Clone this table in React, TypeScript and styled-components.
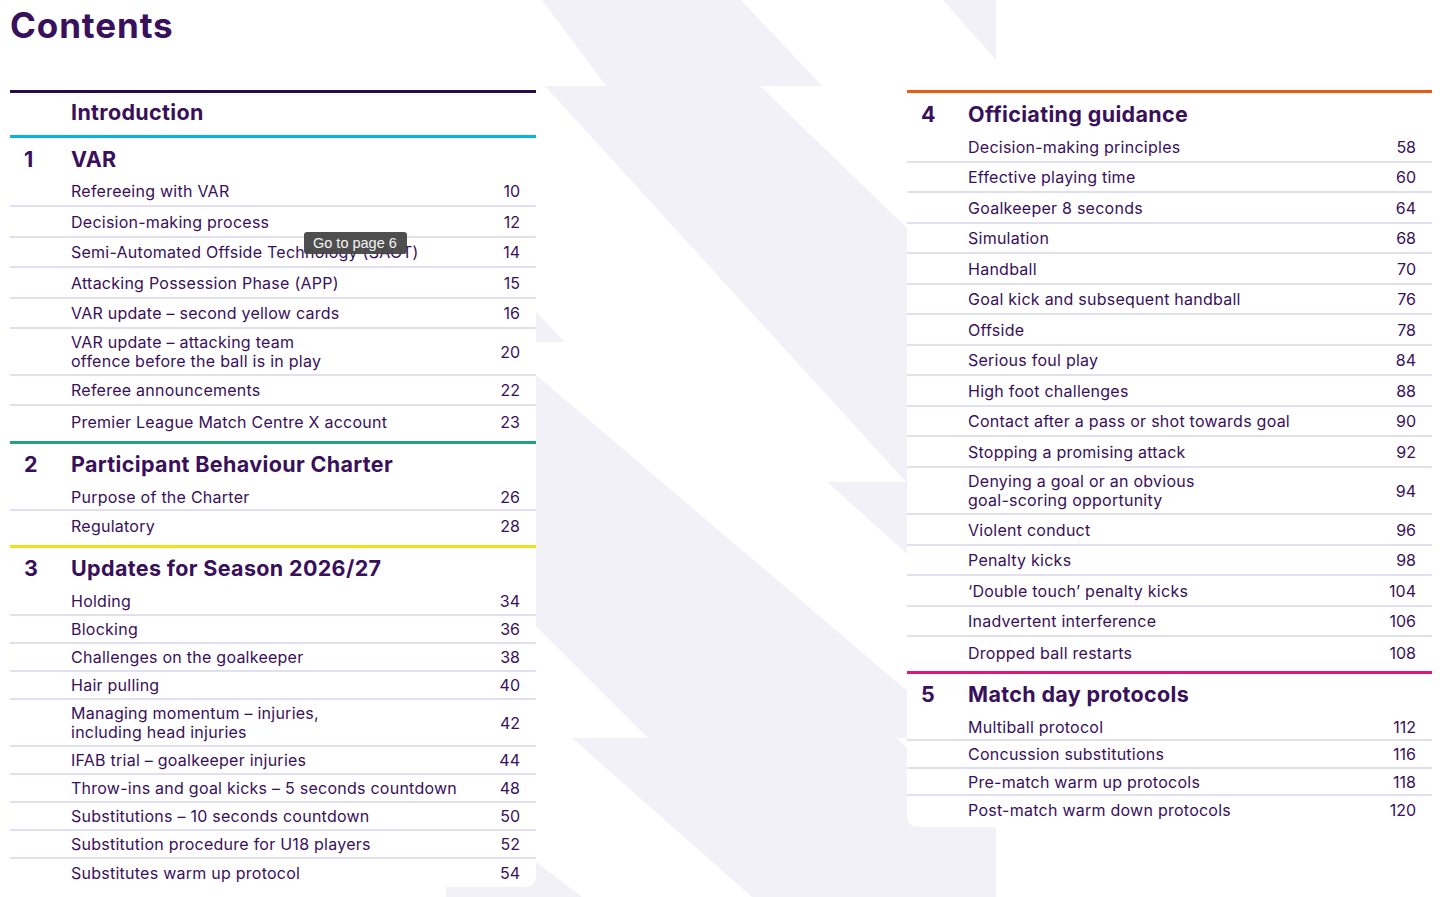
import React from "react";
import styled, { createGlobalStyle } from "styled-components";

const PURPLE = "#38105c";
const SEP = "#e2dfee";
const BG_SHAPE = "#f2f1f7";

const GlobalStyle = createGlobalStyle`
  html, body { margin: 0; padding: 0; background: #ffffff; }
  body { font-family: Inter, Lato, "Noto Sans", Arial, sans-serif; color: ${PURPLE}; }
  * { box-sizing: border-box; }
`;

const Page = styled.div`
  position: relative;
  width: 1456px;
  height: 897px;
  overflow: hidden;
  padding: 0 24px 0 10px;
  background: #ffffff;
`;

const Backdrop = styled.svg`
  position: absolute;
  left: 0;
  top: 0;
  width: 1456px;
  height: 897px;
  z-index: 0;
`;

const Title = styled.h1`
  position: relative;
  z-index: 1;
  margin: 0;
  padding-top: 4px;
  height: 44.5px;
  font-size: 35px;
  line-height: 42px;
  font-weight: 700;
  color: ${PURPLE};
  letter-spacing: 0.9px;
`;

const Columns = styled.div`
  position: relative;
  z-index: 1;
  margin-top: 45.5px;
  display: flex;
  justify-content: space-between;
  align-items: flex-start;
`;

const Panel = styled.div<{ $w: number }>`
  width: ${(p) => p.$w}px;
  background: #ffffff;
  border-radius: 0 0 10px 10px;
  display: flex;
  flex-direction: column;
`;

const Bar = styled.div<{ $c: string }>`
  height: 3px;
  background: ${(p) => p.$c};
`;

const SectionBody = styled.div<{ $pb: number }>`
  padding-bottom: ${(p) => p.$pb}px;
`;

const Header = styled.div<{ $h: number; $pt: number; $pb: number }>`
  height: ${(p) => p.$h}px;
  padding: ${(p) => p.$pt}px 16px ${(p) => p.$pb}px 14px;
  display: grid;
  grid-template-columns: 47px 1fr;
  align-items: center;
  font-size: 21.5px;
  line-height: 26px;
  font-weight: 700;
  color: ${PURPLE};
  letter-spacing: 0.35px;
`;

const Row = styled.div<{ $h: number; $last: boolean }>`
  height: ${(p) => p.$h}px;
  padding: 2px 16px 0 14px;
  display: grid;
  grid-template-columns: 47px 1fr auto;
  align-items: center;
  border-bottom: ${(p) => (p.$last ? "none" : `2px solid ${SEP}`)};
  font-size: 16px;
  line-height: 19.5px;
  font-weight: 400;
  color: ${PURPLE};
  letter-spacing: 0.25px;
`;

const RowText = styled.span`
  white-space: pre-line;
`;

const PageNo = styled.span`
  text-align: right;
  letter-spacing: 0;
`;

const Tooltip = styled.div`
  position: absolute;
  z-index: 2;
  left: 304px;
  top: 232px;
  height: 22px;
  padding: 0 10px 0 9px;
  border-radius: 3px;
  background: rgba(72, 72, 72, 0.96);
  color: #f4f4f4;
  font-family: "Liberation Sans", Arial, sans-serif;
  font-size: 14.5px;
  line-height: 22px;
  white-space: nowrap;
`;

type Item = [string, string];
type Section = {
  bar: string;
  num: string;
  title: string;
  headerH: number;
  headerPt: number;
  headerPb: number;
  rowH: number;
  doubleH: number;
  pb: number;
  items: Item[];
};

const left: Section[] = [
  {
    bar: "#2c0b4c",
    num: "",
    title: "Introduction",
    headerH: 42,
    headerPt: 0,
    headerPb: 4,
    rowH: 30.5,
    doubleH: 46.7,
    pb: 0,
    items: [],
  },
  {
    bar: "#06b3e4",
    num: "1",
    title: "VAR",
    headerH: 38.5,
    headerPt: 3,
    headerPb: 0,
    rowH: 30.5,
    doubleH: 46.7,
    pb: 4.3,
    items: [
      ["Refereeing with VAR", "10"],
      ["Decision-making process", "12"],
      ["Semi-Automated Offside Technology (SAOT)", "14"],
      ["Attacking Possession Phase (APP)", "15"],
      ["VAR update – second yellow cards", "16"],
      ["VAR update – attacking team\noffence before the ball is in play", "20"],
      ["Referee announcements", "22"],
      ["Premier League Match Centre X account", "23"],
    ],
  },
  {
    bar: "#22a37c",
    num: "2",
    title: "Participant Behaviour Charter",
    headerH: 39.5,
    headerPt: 1,
    headerPb: 0,
    rowH: 28,
    doubleH: 47,
    pb: 5.5,
    items: [
      ["Purpose of the Charter", "26"],
      ["Regulatory", "28"],
    ],
  },
  {
    bar: "#ece11c",
    num: "3",
    title: "Updates for Season 2026/27",
    headerH: 40,
    headerPt: 1,
    headerPb: 0,
    rowH: 28,
    doubleH: 47,
    pb: 0,
    items: [
      ["Holding", "34"],
      ["Blocking", "36"],
      ["Challenges on the goalkeeper", "38"],
      ["Hair pulling", "40"],
      ["Managing momentum – injuries,\nincluding head injuries", "42"],
      ["IFAB trial – goalkeeper injuries", "44"],
      ["Throw-ins and goal kicks – 5 seconds countdown", "48"],
      ["Substitutions – 10 seconds countdown", "50"],
      ["Substitution procedure for U18 players", "52"],
      ["Substitutes warm up protocol", "54"],
    ],
  },
];

const right: Section[] = [
  {
    bar: "#eb5a14",
    num: "4",
    title: "Officiating guidance",
    headerH: 39,
    headerPt: 2,
    headerPb: 0,
    rowH: 30.5,
    doubleH: 47.5,
    pb: 3.5,
    items: [
      ["Decision-making principles", "58"],
      ["Effective playing time", "60"],
      ["Goalkeeper 8 seconds", "64"],
      ["Simulation", "68"],
      ["Handball", "70"],
      ["Goal kick and subsequent handball", "76"],
      ["Offside", "78"],
      ["Serious foul play", "84"],
      ["High foot challenges", "88"],
      ["Contact after a pass or shot towards goal", "90"],
      ["Stopping a promising attack", "92"],
      ["Denying a goal or an obvious\ngoal-scoring opportunity", "94"],
      ["Violent conduct", "96"],
      ["Penalty kicks", "98"],
      ["‘Double touch’ penalty kicks", "104"],
      ["Inadvertent interference", "106"],
      ["Dropped ball restarts", "108"],
    ],
  },
  {
    bar: "#e4157a",
    num: "5",
    title: "Match day protocols",
    headerH: 39.5,
    headerPt: 1,
    headerPb: 0,
    rowH: 27.6,
    doubleH: 47,
    pb: 3,
    items: [
      ["Multiball protocol", "112"],
      ["Concussion substitutions", "116"],
      ["Pre-match warm up protocols", "118"],
      ["Post-match warm down protocols", "120"],
    ],
  },
];

function SectionBlock({ s }: { s: Section }) {
  return (
    <>
      <Bar $c={s.bar} />
      <SectionBody $pb={s.pb}>
        <Header $h={s.headerH} $pt={s.headerPt} $pb={s.headerPb}>
          <span>{s.num}</span>
          <span>{s.title}</span>
        </Header>
        {s.items.map(([text, page], i) => (
          <Row
            key={text}
            $h={text.includes("\n") ? s.doubleH : s.rowH}
            $last={i === s.items.length - 1}
          >
            <span />
            <RowText>{text}</RowText>
            <PageNo>{page}</PageNo>
          </Row>
        ))}
      </SectionBody>
    </>
  );
}

function Lightning() {
  return (
    <Backdrop viewBox="0 0 1456 897" aria-hidden="true">
      <defs>
        <clipPath id="bolt-clip">
          <rect x="446" y="0" width="550" height="897" />
        </clipPath>
      </defs>
      <g clipPath="url(#bolt-clip)" fill={BG_SHAPE}>
        <polygon points="542,0 741,0 822,86 606,86" />
        <polygon points="545,86 760,86 1000,318 1000,585" />
        <polygon points="827,482 1000,482 1000,637" />
        <polygon points="446,219 565,342 446,342" />
        <polygon points="536,375 905,689 1000,689 1000,738 648,738 536,626" />
        <polygon points="572,738 896,738 1000,832 1000,897 752,897" />
        <polygon points="446,794 536,862 582,897 446,897" />
        <polygon points="943,0 996,0 996,60" />
      </g>
    </Backdrop>
  );
}

export default function App() {
  return (
    <>
      <GlobalStyle />
      <Page>
        <Lightning />
        <Title>Contents</Title>
        <Columns>
          <Panel $w={526}>
            {left.map((s) => (
              <SectionBlock key={s.title} s={s} />
            ))}
          </Panel>
          <Panel $w={525}>
            {right.map((s) => (
              <SectionBlock key={s.title} s={s} />
            ))}
          </Panel>
        </Columns>
        <Tooltip>Go to page 6</Tooltip>
      </Page>
    </>
  );
}
